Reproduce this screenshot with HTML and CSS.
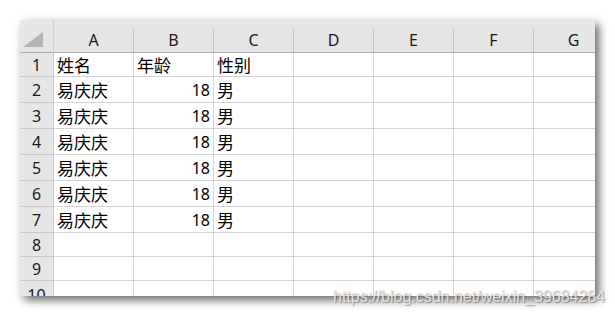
FILE: index.html
```html
<!DOCTYPE html>
<html lang="zh-CN">
<head>
    <meta charset="UTF-8">
    <meta name="viewport" content="width=device-width, initial-scale=1.0">
    <title>Sheet1</title>
    <link rel="stylesheet" href="styles.css">
</head>
<body>
    <div class="page">
        <div class="sheet">
            <div class="grid">
                <div class="corner">
                    <svg width="20" height="15" viewBox="0 0 20 15"><polygon points="20,0 20,15 0,15" fill="#b5b5b5"/></svg>
                </div>
                <div class="col-head"><span>A</span></div>
                <div class="col-head"><span>B</span></div>
                <div class="col-head"><span>C</span></div>
                <div class="col-head"><span>D</span></div>
                <div class="col-head"><span>E</span></div>
                <div class="col-head"><span>F</span></div>
                <div class="col-head"><span>G</span></div>

                <div class="row-head">1</div>
                <div class="cell">姓名</div><div class="cell">年龄</div><div class="cell">性别</div>
                <div class="cell"></div><div class="cell"></div><div class="cell"></div><div class="cell"></div>

                <div class="row-head">2</div>
                <div class="cell">易庆庆</div><div class="cell num">18</div><div class="cell">男</div>
                <div class="cell"></div><div class="cell"></div><div class="cell"></div><div class="cell"></div>

                <div class="row-head">3</div>
                <div class="cell">易庆庆</div><div class="cell num">18</div><div class="cell">男</div>
                <div class="cell"></div><div class="cell"></div><div class="cell"></div><div class="cell"></div>

                <div class="row-head">4</div>
                <div class="cell">易庆庆</div><div class="cell num">18</div><div class="cell">男</div>
                <div class="cell"></div><div class="cell"></div><div class="cell"></div><div class="cell"></div>

                <div class="row-head">5</div>
                <div class="cell">易庆庆</div><div class="cell num">18</div><div class="cell">男</div>
                <div class="cell"></div><div class="cell"></div><div class="cell"></div><div class="cell"></div>

                <div class="row-head">6</div>
                <div class="cell">易庆庆</div><div class="cell num">18</div><div class="cell">男</div>
                <div class="cell"></div><div class="cell"></div><div class="cell"></div><div class="cell"></div>

                <div class="row-head">7</div>
                <div class="cell">易庆庆</div><div class="cell num">18</div><div class="cell">男</div>
                <div class="cell"></div><div class="cell"></div><div class="cell"></div><div class="cell"></div>

                <div class="row-head">8</div>
                <div class="cell"></div><div class="cell"></div><div class="cell"></div>
                <div class="cell"></div><div class="cell"></div><div class="cell"></div><div class="cell"></div>

                <div class="row-head">9</div>
                <div class="cell"></div><div class="cell"></div><div class="cell"></div>
                <div class="cell"></div><div class="cell"></div><div class="cell"></div><div class="cell"></div>

                <div class="row-head last">10</div>
                <div class="cell"></div><div class="cell"></div><div class="cell"></div>
                <div class="cell"></div><div class="cell"></div><div class="cell"></div><div class="cell"></div>
            </div>
        </div>
        <div class="watermark">https://blog.csdn.net/weixin_39684284</div>
    </div>
</body>
</html>
```

FILE: styles.css
```css
body {
    margin: 0;
    background-color: #ffffff;
    font-family: "Noto Sans", "Noto Sans CJK SC", sans-serif;
}
.page {
    position: relative;
    width: 615px;
    height: 316px;
    padding: 20px;
    box-sizing: border-box;
}
.sheet {
    width: 575px;
    height: 276px;
    overflow: hidden;
    background-color: #ffffff;
    box-shadow: 4px 4px 9px rgba(0, 0, 0, 0.6);
}
.grid {
    display: grid;
    grid-template-columns: 34px repeat(7, 80px);
    grid-template-rows: 33px 24px repeat(6, 26px) 24px 24px 24px;
}
.corner {
    background-color: #e6e6e6;
    border-bottom: 1px solid #ababab;
    border-right: 1px solid #d0d0d0;
    box-sizing: border-box;
    display: flex;
    align-items: flex-end;
    justify-content: flex-end;
    padding: 0 10px 5px 0;
}
.corner svg {
    display: block;
}
.col-head {
    background-color: #e6e6e6;
    border-bottom: 1px solid #ababab;
    box-sizing: border-box;
    padding-top: 9px;
    display: flex;
    font-size: 16px;
    color: #1a1a1a;
}
.col-head span {
    flex: 1;
    display: flex;
    align-items: center;
    justify-content: center;
    border-right: 1px solid #c4c4c4;
    padding-bottom: 1px;
}
.row-head {
    background-color: #e6e6e6;
    border-right: 1px solid #c8c8c8;
    border-bottom: 1px solid #c8c8c8;
    box-sizing: border-box;
    display: flex;
    align-items: center;
    justify-content: center;
    font-size: 16px;
    color: #1a1a1a;
}
.row-head.last {
    align-items: flex-start;
    padding-top: 3px;
}
.cell {
    border-right: 1px solid #d4d4d4;
    border-bottom: 1px solid #d4d4d4;
    box-sizing: border-box;
    display: flex;
    align-items: center;
    padding-left: 3px;
    font-family: "Noto Sans CJK SC", sans-serif;
    font-size: 17px;
    color: #000;
    white-space: nowrap;
    overflow: hidden;
}
.cell.num {
    justify-content: flex-end;
    padding: 0 3px 0 0;
    font-family: "Noto Sans", sans-serif;
    font-size: 16px;
}
.watermark {
    position: absolute;
    left: 333px;
    top: 288px;
    font-family: "Liberation Sans", Arial, sans-serif;
    font-size: 16px;
    color: #e4e4e4;
    text-shadow: 1px 1px 1px rgba(0, 0, 0, 0.35);
}
```
